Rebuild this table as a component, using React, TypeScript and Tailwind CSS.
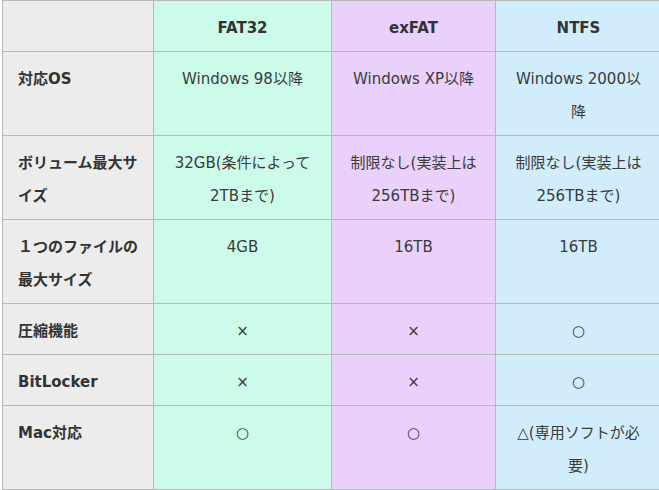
import React from 'react';

type Row = {
  label: React.ReactNode;
  fat32: React.ReactNode;
  exfat: React.ReactNode;
  ntfs: React.ReactNode;
};

const rows: Row[] = [
  { label: '対応OS', fat32: 'Windows 98以降', exfat: 'Windows XP以降', ntfs: <>Windows 2000以<br />降</> },
  {
    label: <>ボリューム最大サ<br />イズ</>,
    fat32: <>32GB(条件によって<br />2TBまで)</>,
    exfat: <>制限なし(実装上は<br />256TBまで)</>,
    ntfs: <>制限なし(実装上は<br />256TBまで)</>,
  },
  { label: <>１つのファイルの<br />最大サイズ</>, fat32: '4GB', exfat: '16TB', ntfs: '16TB' },
  { label: '圧縮機能', fat32: '×', exfat: '×', ntfs: '○' },
  { label: 'BitLocker', fat32: '×', exfat: '×', ntfs: '○' },
  { label: 'Mac対応', fat32: '○', exfat: '○', ntfs: <>△(専用ソフトが必<br />要)</> },
];

const cell = 'border-r border-b border-[#b8b8b8] pt-[11px] pb-[6px] leading-[33px]';

export default function App() {
  return (
    <div
      className="w-[659px] h-[490px] overflow-hidden bg-white text-[15px] text-[#3a3a3a]"
      style={{ fontFamily: '"DejaVu Sans", "Noto Sans CJK JP", sans-serif' }}
    >
      <div className="ml-[2px] grid w-[659px] grid-cols-[151px_178px_164px_166px] border-t border-l border-[#b8b8b8]">
        {/* Header */}
        <div className={`${cell} bg-[#ececec]`} />
        <div className={`${cell} bg-[#cdfbe9] text-center font-bold text-[#333]`}>FAT32</div>
        <div className={`${cell} bg-[#e9d1fb] text-center font-bold text-[#333]`}>exFAT</div>
        <div className={`${cell} bg-[#d1edfb] text-center font-bold text-[#333]`}>NTFS</div>

        {rows.map((r, i) => (
          <React.Fragment key={i}>
            <div className={`${cell} bg-[#ececec] pl-[15px] pr-[10px] font-bold text-[#333]`}>{r.label}</div>
            <div className={`${cell} bg-[#cdfbe9] px-[12px] text-center`}>{r.fat32}</div>
            <div className={`${cell} bg-[#e9d1fb] px-[12px] text-center`}>{r.exfat}</div>
            <div className={`${cell} bg-[#d1edfb] px-[12px] text-center`}>{r.ntfs}</div>
          </React.Fragment>
        ))}
      </div>
    </div>
  );
}
